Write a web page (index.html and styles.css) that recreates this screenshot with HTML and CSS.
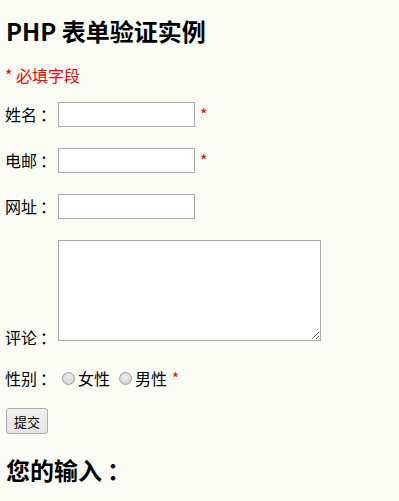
FILE: index.html
```html
<!DOCTYPE html>
<html lang="zh-CN">
<head>
<meta charset="utf-8">
<title>PHP 表单验证实例</title>
<link rel="stylesheet" href="styles.css">
</head>
<body>
<h2 class="title">PHP 表单验证实例</h2>
<p class="required-note">* 必填字段</p>
<form class="form">
  <div class="row row-name">
    <span class="label">姓名<span class="colon">：</span></span>
    <input class="text-input" type="text" name="name">
    <span class="star">*</span>
  </div>
  <div class="row row-email">
    <span class="label">电邮<span class="colon">：</span></span>
    <input class="text-input" type="text" name="email">
    <span class="star">*</span>
  </div>
  <div class="row row-url">
    <span class="label">网址<span class="colon">：</span></span>
    <input class="text-input" type="text" name="website">
  </div>
  <div class="row row-comment">
    <span class="label label-comment">评论<span class="colon">：</span></span>
    <textarea class="comment" name="comment"></textarea>
  </div>
  <div class="row row-gender">
    <span class="label">性别<span class="colon">：</span></span>
    <input class="radio" type="radio" name="gender" value="female"><span class="opt">女性</span>
    <input class="radio radio-2" type="radio" name="gender" value="male"><span class="opt">男性</span>
    <span class="star star-gender">*</span>
  </div>
  <div class="row row-submit">
    <button class="submit" type="button">提交</button>
  </div>
</form>
<h2 class="title title-output">您的输入<span class="colon-big">：</span></h2>
</body>
</html>
```
FILE: styles.css
```css
html, body {
  margin: 0;
  padding: 0;
}
body {
  background: #fcfcf7;
  padding: 0 5px;
  font-family: "Noto Sans CJK SC", "Noto Sans", sans-serif;
  font-size: 16px;
  color: #000;
}
.title {
  margin: 16px 0 0 1px;
  font-size: 24px;
  line-height: 30px;
  font-weight: bold;
}
.colon-big {
  display: inline-block;
  padding-left: 5px;
}
.required-note {
  margin: 19px 0 0 0;
  line-height: 20px;
  color: #ff0000;
}
.form {
  margin: 0;
}
.row {
  display: flex;
  align-items: center;
}
.row-name {
  margin-top: 16px;
  height: 26px;
}
.row-email,
.row-url {
  margin-top: 20px;
  height: 26px;
}
.label {
  line-height: 20px;
  width: 48px;
  white-space: nowrap;
}
.colon {
  display: inline-block;
  padding-left: 3px;
}
.text-input {
  box-sizing: border-box;
  width: 137px;
  height: 25px;
  margin: 0 0 0 5px;
  border: 1px solid #a9a9a9;
  background: #fff;
  padding: 1px 2px;
  font-size: 13px;
}
.star {
  color: #ff0000;
  margin-left: 5px;
  line-height: 20px;
}
.row-comment {
  margin-top: 21px;
  align-items: flex-end;
}
.label-comment {
  line-height: 14px;
  margin-bottom: -3px;
}
.comment {
  box-sizing: border-box;
  width: 263px;
  height: 101px;
  margin: 0 0 0 5px;
  border: 1px solid #a9a9a9;
  background: #fff;
  padding: 2px;
  font-size: 13px;
}
.row-gender {
  margin-top: 27px;
  height: 20px;
}
.radio {
  appearance: none;
  -webkit-appearance: none;
  box-sizing: border-box;
  width: 13px;
  height: 13px;
  margin: 1px 3px 0 9px;
  border: 1px solid #9f9f9f;
  border-radius: 50%;
  background: radial-gradient(circle at 50% 40%, #eeeeee 0%, #d6d6d6 70%, #c8c8c8 100%);
}
.radio-2 {
  margin-left: 9px;
}
.opt {
  line-height: 20px;
}
.star-gender {
  margin-left: 5px;
  font-size: 15px;
}
.row-submit {
  margin-top: 20px;
}
.submit {
  box-sizing: border-box;
  width: 42px;
  height: 26px;
  margin: 0 0 0 1px;
  padding: 0;
  border: 1px solid #acacac;
  border-radius: 3px;
  background: linear-gradient(#f2f2f2, #e3e3e3);
  font-family: "Noto Sans CJK SC", sans-serif;
  font-size: 13px;
  color: #000;
}
.title-output {
  margin-top: 21px;
}
```
